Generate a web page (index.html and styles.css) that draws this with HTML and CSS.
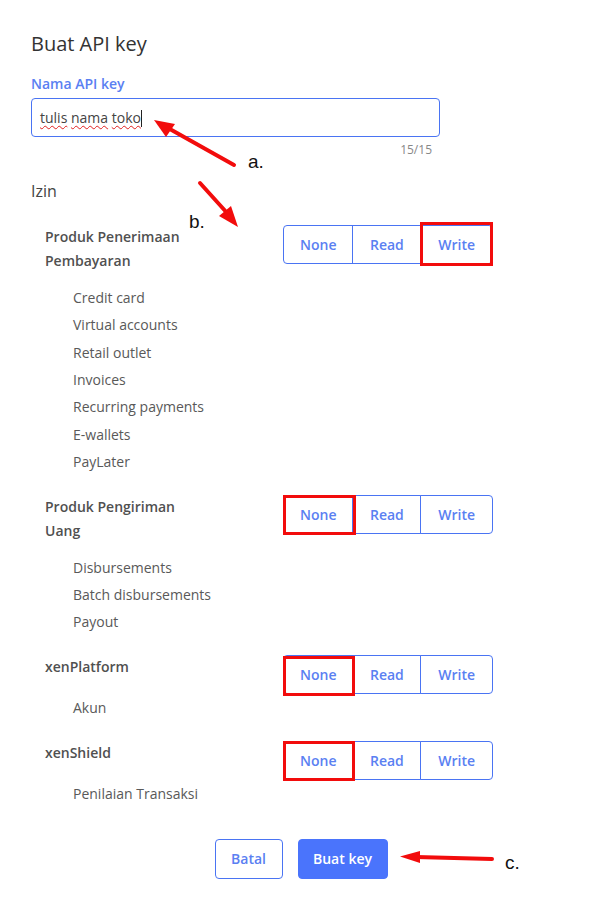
FILE: index.html
```html
<!DOCTYPE html>
<html lang="id">
<head>
<meta charset="utf-8">
<title>Buat API key</title>
<link rel="stylesheet" href="styles.css">
</head>
<body>
<div class="page">
  <div class="content">
    <h1 class="title">Buat API key</h1>
    <div class="field-label">Nama API key</div>
    <div class="input"><span class="sp">tulis</span> <span class="sp">nama</span> <span class="sp">toko</span><span class="caret"></span></div>
    <div class="counter">15/15</div>
    <div class="izin">Izin</div>

    <div class="perm first">
      <div class="perm-head">
        <div class="perm-name">Produk Penerimaan Pembayaran</div>
        <div class="seg"><button class="seg-btn">None</button><button class="seg-btn">Read</button><button class="seg-btn">Write</button></div>
      </div>
      <ul class="items">
        <li>Credit card</li>
        <li>Virtual accounts</li>
        <li>Retail outlet</li>
        <li>Invoices</li>
        <li>Recurring payments</li>
        <li>E-wallets</li>
        <li>PayLater</li>
      </ul>
    </div>

    <div class="perm">
      <div class="perm-head">
        <div class="perm-name">Produk Pengiriman Uang</div>
        <div class="seg"><button class="seg-btn">None</button><button class="seg-btn">Read</button><button class="seg-btn">Write</button></div>
      </div>
      <ul class="items">
        <li>Disbursements</li>
        <li>Batch disbursements</li>
        <li>Payout</li>
      </ul>
    </div>

    <div class="perm">
      <div class="perm-head">
        <div class="perm-name">xenPlatform</div>
        <div class="seg"><button class="seg-btn">None</button><button class="seg-btn">Read</button><button class="seg-btn">Write</button></div>
      </div>
      <ul class="items">
        <li>Akun</li>
      </ul>
    </div>

    <div class="perm">
      <div class="perm-head">
        <div class="perm-name">xenShield</div>
        <div class="seg"><button class="seg-btn">None</button><button class="seg-btn">Read</button><button class="seg-btn">Write</button></div>
      </div>
      <ul class="items">
        <li>Penilaian Transaksi</li>
      </ul>
    </div>
  </div>

  <div class="actions">
    <button class="btn btn-outline">Batal</button>
    <button class="btn btn-primary">Buat key</button>
  </div>

  <svg class="annot" width="603" height="910" viewBox="0 0 603 910">
    <g fill="none" stroke="#f20c0c" stroke-width="3">
      <rect x="421.5" y="223.5" width="70" height="41"/>
      <rect x="284.5" y="496.5" width="70" height="37"/>
      <rect x="284.5" y="657.5" width="69" height="37"/>
      <rect x="284.5" y="742.5" width="69" height="37"/>
    </g>
    <g stroke="#f20c0c" stroke-width="4" stroke-linecap="round">
      <line x1="234" y1="165" x2="168" y2="128"/>
      <line x1="200" y1="183" x2="228" y2="214"/>
      <line x1="492" y1="859" x2="416" y2="857"/>
    </g>
    <g fill="#f20c0c">
      <polygon points="154,120 175,124 166,137"/>
      <polygon points="238,227 219,216 231,206"/>
      <polygon points="400,856.5 420,851 420,863"/>
    </g>
  </svg>
  <span class="tag tag-a">a.</span>
  <span class="tag tag-b">b.</span>
  <span class="tag tag-c">c.</span>
</div>
</body>
</html>
```

FILE: styles.css
```css
* { box-sizing: border-box; }
html, body { margin: 0; padding: 0; background: #fff; }
body { font-family: "Open Sans", "Noto Sans", sans-serif; color: #444; }

.page {
  position: relative;
  width: 603px;
  height: 910px;
  padding-top: 30px;
  overflow: hidden;
}
.content { padding-left: 31px; }

.title {
  margin: 0;
  font-size: 20px;
  line-height: 28px;
  font-weight: 400;
  color: #333;
}
.field-label {
  margin-top: 16px;
  font-size: 14px;
  line-height: 20px;
  font-weight: 600;
  color: #5a80f2;
}
.input {
  margin-top: 4px;
  width: 409px;
  height: 39px;
  border: 1px solid #4a74f3;
  border-radius: 4px;
  padding: 0 8px;
  font-size: 14px;
  line-height: 37px;
  color: #444;
  white-space: pre;
}
.sp {
  text-decoration: underline wavy #e02020;
  text-decoration-thickness: 1px;
  text-decoration-skip-ink: none;
  text-underline-offset: 2px;
}
.caret {
  display: inline-block;
  width: 1px;
  height: 17px;
  background: #222;
  vertical-align: -4px;
}
.counter {
  width: 409px;
  margin-top: 5px;
  padding-right: 8px;
  text-align: right;
  font-size: 12px;
  line-height: 16px;
  color: #888;
}
.izin {
  margin-top: 21px;
  font-size: 16px;
  line-height: 24px;
  color: #444;
}

.perm { margin-left: 14px; margin-top: 19.5px; }
.perm.first { margin-top: 22px; }
.perm-head {
  display: grid;
  grid-template-columns: 238px auto;
  align-items: start;
}
.perm-name {
  max-width: 160px;
  font-size: 14px;
  line-height: 24px;
  font-weight: 600;
  color: #505050;
  margin-bottom: 11px;
}
.seg { display: flex; }
.seg-btn {
  height: 39px;
  padding: 0 16px;
  margin: 0;
  margin-left: -1px;
  border: 1px solid #4a74f3;
  background: #fff;
  color: #5a80f2;
  font-family: "Open Sans", "Noto Sans", sans-serif;
  font-size: 14px;
  font-weight: 600;
}
.seg-btn:first-child { margin-left: 0; border-radius: 4px 0 0 4px; }
.seg-btn:nth-child(2) { padding: 0 16.5px; }
.seg-btn:last-child { border-radius: 0 4px 4px 0; padding: 0 17px; }

.items {
  list-style: none;
  margin: 0;
  padding: 0 0 0 28px;
  font-size: 14px;
  line-height: 27.33px;
  color: #595959;
}

.actions {
  display: flex;
  justify-content: center;
  gap: 15px;
  margin-top: 31.5px;
  padding-right: 1px;
}
.btn {
  height: 40px;
  border-radius: 4px;
  font-family: "Open Sans", "Noto Sans", sans-serif;
  font-size: 14px;
  font-weight: 600;
  margin: 0;
}
.btn-outline {
  width: 68px;
  border: 1px solid #4a74f3;
  background: #fff;
  color: #5a80f2;
}
.btn-primary {
  width: 90px;
  border: 1px solid #4a74fc;
  background: #4a74fc;
  color: #fff;
}

.annot { position: absolute; left: 0; top: 0; pointer-events: none; }
.tag {
  position: absolute;
  font-family: "Liberation Sans", Arial, sans-serif;
  font-size: 19px;
  line-height: 20px;
  color: #111;
}
.tag-a { left: 248px; top: 152px; }
.tag-b { left: 189px; top: 212px; }
.tag-c { left: 505px; top: 853px; }
```
